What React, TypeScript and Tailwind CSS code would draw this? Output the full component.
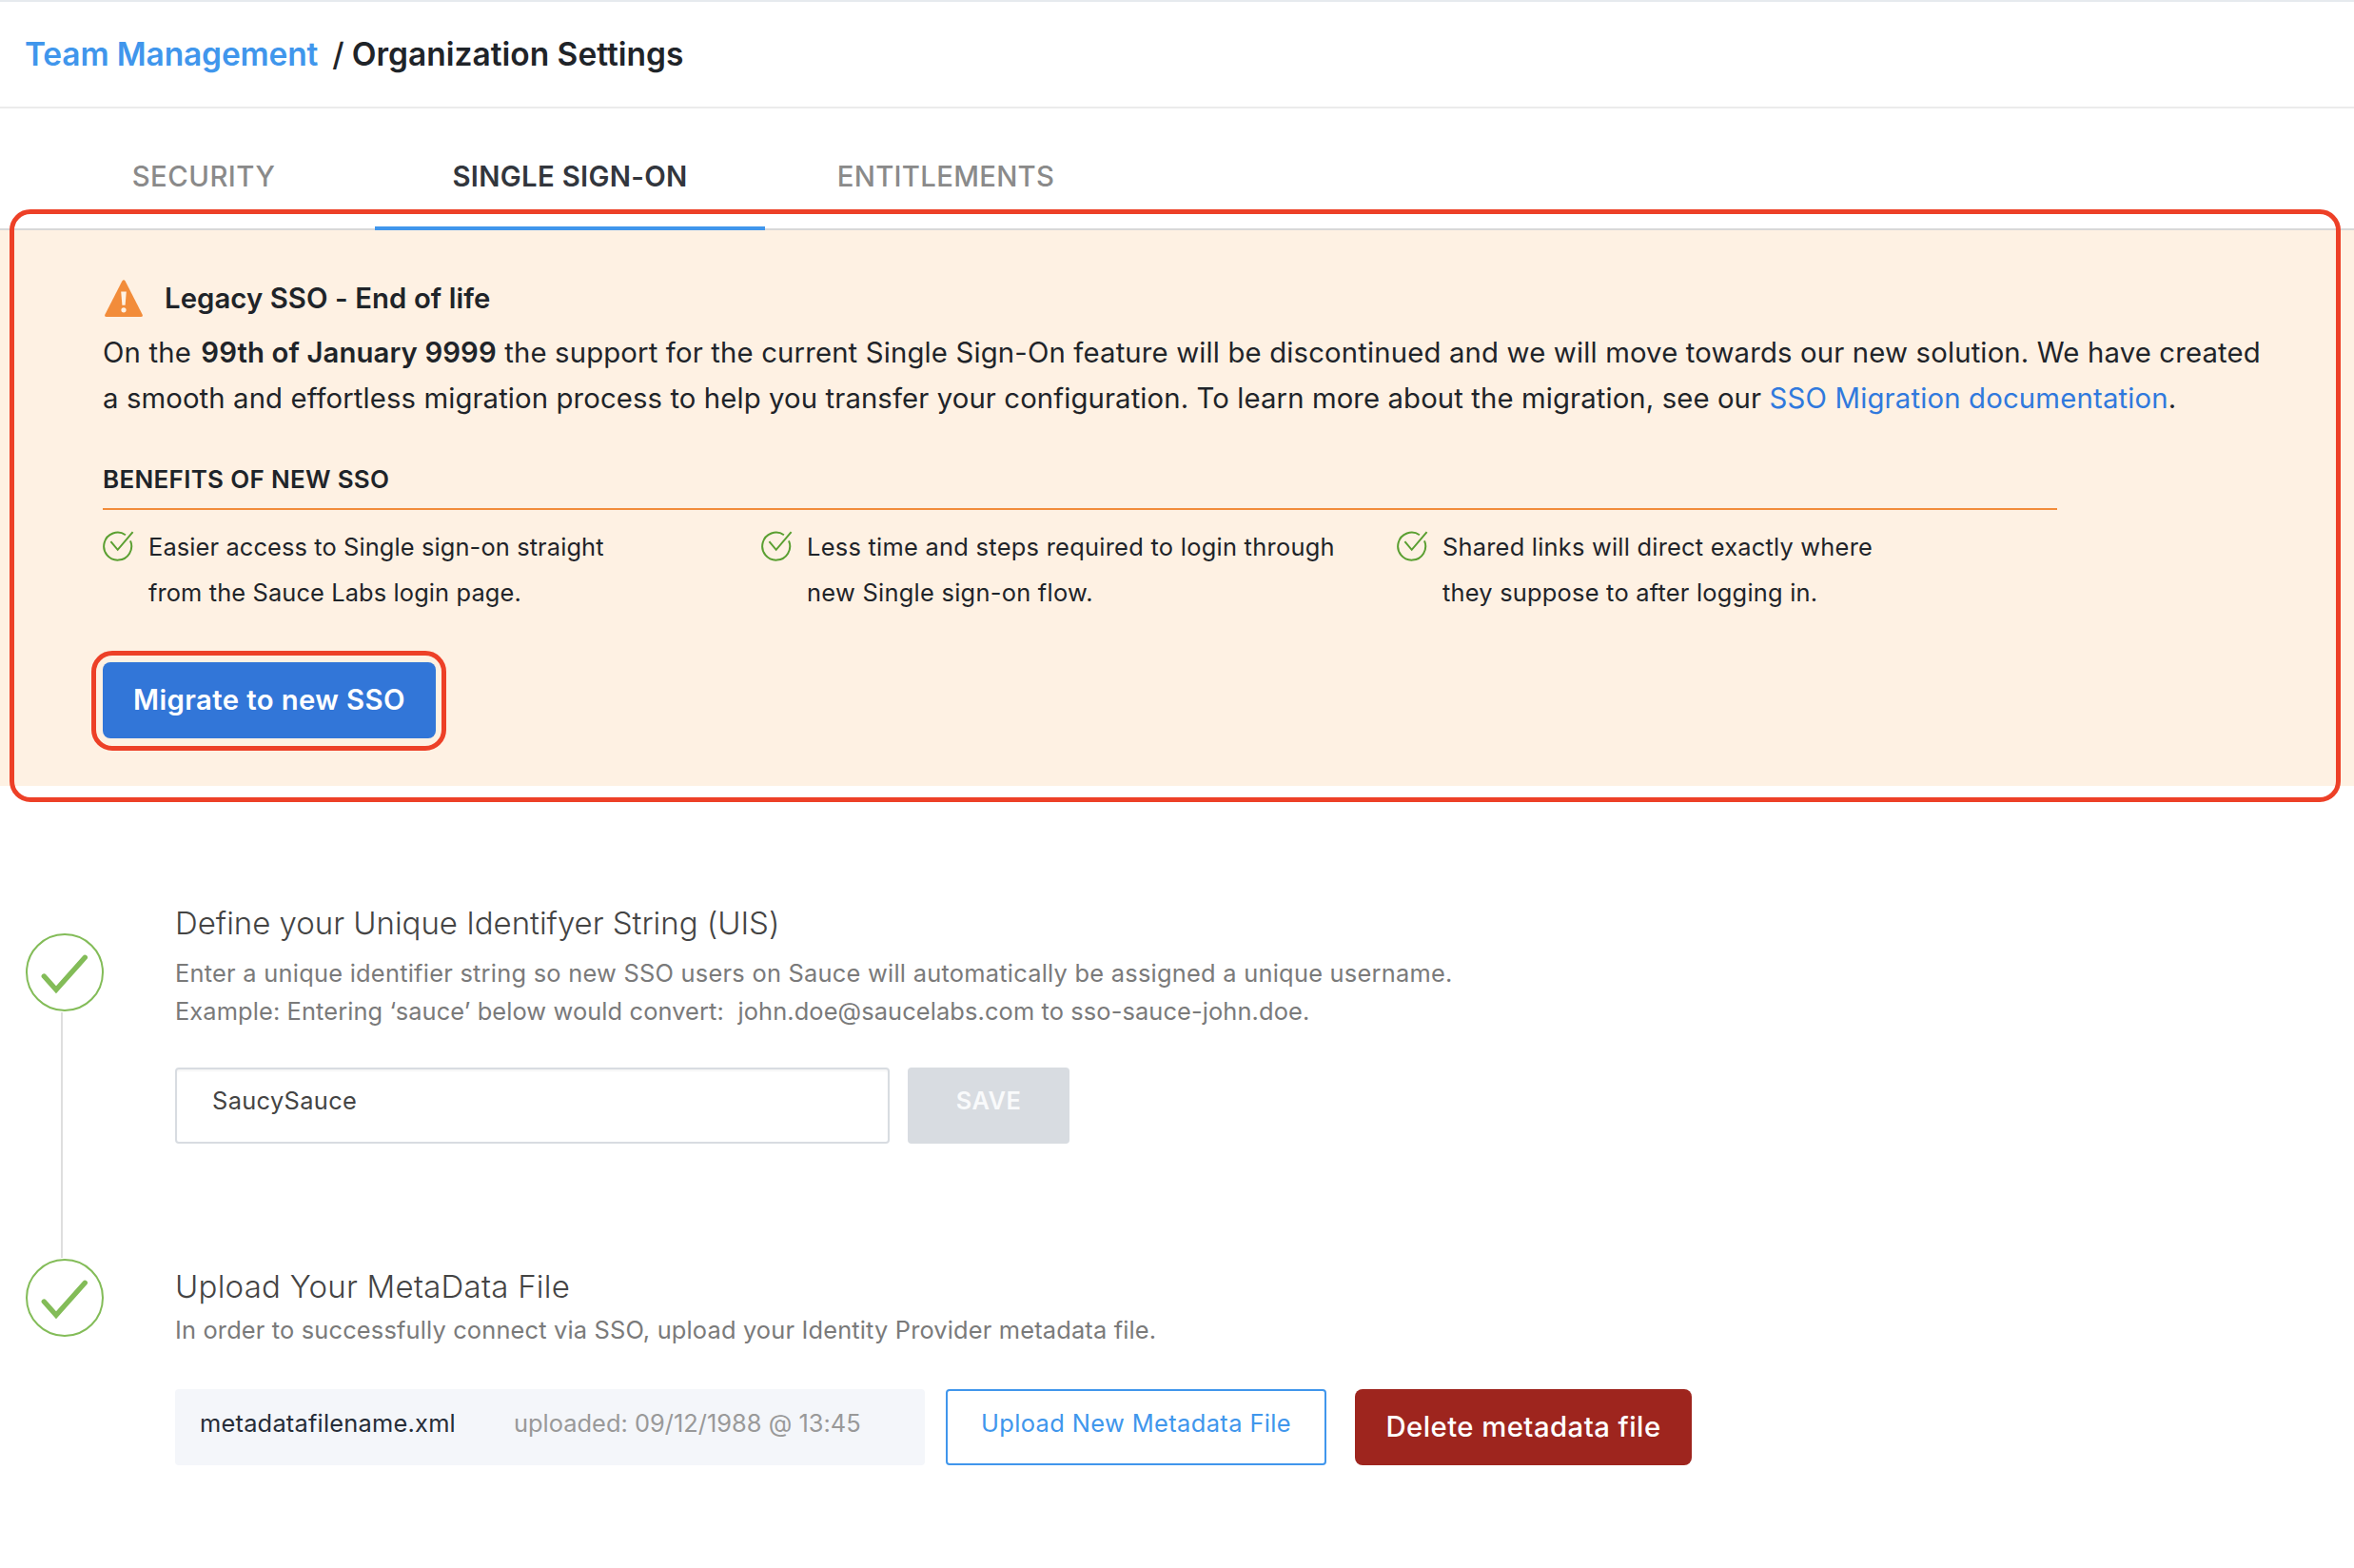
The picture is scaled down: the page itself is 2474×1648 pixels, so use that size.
type Benefit = { lines: [string, string]; width: string; tracking: string };

const BENEFITS: Benefit[] = [
  {
    lines: ["Easier access to Single sign-on straight", "from the Sauce Labs login page."],
    width: "w-[692px]",
    tracking: "tracking-[0.12px]",
  },
  {
    lines: ["Less time and steps required to login through", "new Single sign-on flow."],
    width: "w-[668px]",
    tracking: "tracking-[0.28px]",
  },
  {
    lines: ["Shared links will direct exactly where", "they suppose to after logging in."],
    width: "w-[600px]",
    tracking: "tracking-[0.23px]",
  },
];

function WarningIcon() {
  return (
    <svg className="size-10 shrink-0" viewBox="0 0 40 40">
      <path
        d="M18.3 1.4Q20 -0.8 21.7 1.4L39.6 36.4Q40.6 39 38 39H2Q-0.6 39 0.4 36.4Z"
        fill="#f28c3a"
      />
      <path d="M17.2 12.6H22.8L21.6 26.8H18.4Z" fill="#fef1e4" />
      <circle cx="20" cy="31.8" r="2.6" fill="#fef1e4" />
    </svg>
  );
}

function BenefitCheck() {
  return (
    <svg className="mt-[7px] h-[34px] w-[34px] shrink-0" viewBox="0 0 34 34" fill="none" stroke="#5a9f31" strokeWidth="2">
      <path d="M23.9 4.2A14.5 14.5 0 1 0 29 10.4" />
      <path d="M8.4 11.2L15.7 19.8L31.6 1.2" />
    </svg>
  );
}

function StepCheck() {
  return (
    <svg className="size-[82px] shrink-0" viewBox="0 0 82 82" fill="none" stroke="#83bc58">
      <circle cx="41" cy="41" r="40" strokeWidth="2" />
      <path d="M19.3 45L32 59.3L62.3 25.3" strokeWidth="5.4" strokeLinecap="round" strokeLinejoin="miter" />
    </svg>
  );
}

export default function App() {
  return (
    <div className="relative min-h-[1648px] w-[2474px] overflow-hidden bg-white font-['Inter','Liberation_Sans',sans-serif] text-[#1f2429]">
      <header className="flex h-[114px] items-center border-y-2 border-t-[#e6eaee] border-b-[#ebebeb] pb-px pl-[26px] text-[33.5px] font-semibold leading-[44px] whitespace-pre">
        <a className="tracking-[-0.14px] text-[#4096ec]">Team Management</a>
        <span className="ml-[15px] font-medium">/</span>
        <h1 className="ml-[8px]">Organization Settings</h1>
      </header>

      <nav className="flex h-[128px] border-b-2 border-[#d8d8d8] pl-[34px] text-[29.3px] leading-[40px] font-medium tracking-[0.3px] text-[#8a8a8a]">
        <a className="-mb-[2px] flex w-[360px] items-center justify-center border-b-4 border-transparent pt-[20px] tracking-[0.5px]">
          SECURITY
        </a>
        <a className="-mb-[2px] flex w-[410px] items-center justify-center border-b-4 border-[#4096ec] pt-[20px] font-semibold text-[#32363d]">
          SINGLE SIGN-ON
        </a>
        <a className="-mb-[2px] flex w-[380px] items-center justify-center border-b-4 border-transparent pt-[20px]">
          ENTITLEMENTS
        </a>
      </nav>

      <section className="relative bg-[#fef1e3] pt-[48px] pb-[50px] pl-[108px]">
        <div className="pointer-events-none absolute -top-[22px] right-[14px] -bottom-[17px] left-[10px] rounded-[22px] border-[5px] border-[#ed4027]" />

        <div className="flex h-[48px] items-center pl-[2px]">
          <WarningIcon />
          <h2 className="ml-[23px] text-[29.3px] font-semibold leading-[40px] tracking-[0.08px]">
            Legacy SSO - End of life
          </h2>
        </div>

        <p className="mt-[9px] text-[29.3px] leading-[48px] tracking-[0.16px] whitespace-nowrap">
          On the <b className="ml-[2px] font-semibold tracking-[0.1px]">99th of January 9999</b> the support for the
          current Single Sign-On feature will be discontinued and we will move towards our new solution. We have created
          <br />
          <span className="tracking-[0.11px]">
            a smooth and effortless migration process to help you transfer your configuration. To learn more about the
            migration, see our <a className="tracking-[0.18px] text-[#3079dd]">SSO Migration documentation</a>.
          </span>
        </p>

        <h3 className="mt-[41px] w-[2054px] border-b-2 border-[#f28c3a] pb-[10px] text-[26px] font-semibold leading-[40px] tracking-[0.3px]">
          BENEFITS OF NEW SSO
        </h3>

        <ul className="mt-[15px] flex text-[25.4px] leading-[48px] whitespace-nowrap">
          {BENEFITS.map((b) => (
            <li key={b.lines[0]} className={`flex ${b.width}`}>
              <BenefitCheck />
              <p className={`ml-[14px] ${b.tracking}`}>
                {b.lines[0]}
                <br />
                {b.lines[1]}
              </p>
            </li>
          ))}
        </ul>

        <div className="relative mt-[49px] h-[80px] w-[350px]">
          <button className="h-full w-full rounded-[8px] bg-[#3276d8] pb-px text-[29.3px] font-semibold tracking-[0.4px] whitespace-nowrap text-white">
            Migrate to new SSO
          </button>
          <div className="pointer-events-none absolute -top-[12px] -right-[11px] -bottom-[13px] -left-[12px] rounded-[22px] border-[5px] border-[#ed4027]" />
        </div>
      </section>

      <main className="mt-[122px] flex gap-[75px] pl-[27px]">
        <div className="flex w-[82px] shrink-0 flex-col pt-[33px]">
          <StepCheck />
          <div className="mt-px mb-px ml-[37px] h-[258px] w-[2px] bg-[#dedede]" />
          <StepCheck />
        </div>

        <div className="whitespace-nowrap text-[25.4px]">
          <section>
            <h2 className="text-[33px] font-light leading-[44px] tracking-[-0.03px] text-[#444]">
              Define your Unique Identifyer String (UIS)
            </h2>
            <p className="mt-[11px] leading-[40px] tracking-[0.25px] text-[#7a7a7a]">
              Enter a unique identifier string so new SSO users on Sauce will automatically be assigned a unique
              username.
              <br />
              <span className="tracking-[0.11px]">
                Example: Entering ‘sauce’ below would convert: &nbsp;john.doe@saucelabs.com to sso-sauce-john.doe.
              </span>
            </p>
            <div className="mt-[39px] flex gap-[19px]">
              <div className="flex h-[80px] w-[751px] items-center rounded-[4px] border-2 border-[#d8dce1] pb-[10px] pl-[37px] tracking-[0.35px] text-[#444] shadow-[inset_0_2px_2px_rgba(0,0,0,0.04)]">
                SaucySauce
              </div>
              <button className="h-[80px] w-[170px] rounded-[4px] bg-[#d8dce1] pb-[9px] font-semibold tracking-[0.5px] text-[#f9fafb]">
                SAVE
              </button>
            </div>
          </section>

          <section className="mt-[128px]">
            <h2 className="text-[33px] font-light leading-[44px] tracking-[0.25px] text-[#444]">
              Upload Your MetaData File
            </h2>
            <p className="mt-[4px] leading-[40px] tracking-[0.165px] text-[#7a7a7a]">
              In order to successfully connect via SSO, upload your Identity Provider metadata file.
            </p>
            <div className="mt-[42px] flex">
              <div className="flex h-[80px] w-[788px] items-center rounded-[4px] bg-[#f4f6fa] pb-[7px] pl-[26px]">
                <span className="tracking-[0.22px] text-[#262d38]">metadatafilename.xml</span>
                <span className="ml-[61px] tracking-[0.02px] text-[#999]">uploaded: 09/12/1988 @ 13:45</span>
              </div>
              <button className="ml-[22px] h-[80px] w-[400px] rounded-[4px] border-2 border-[#4096ec] bg-white pb-[7px] tracking-[0.4px] text-[#4096ec]">
                Upload New Metadata File
              </button>
              <button className="ml-[30px] h-[80px] w-[354px] rounded-[8px] bg-[#9e251e] pb-px text-[29.3px] font-medium tracking-[0.45px] text-white">
                Delete metadata file
              </button>
            </div>
          </section>
        </div>
      </main>
    </div>
  );
}
